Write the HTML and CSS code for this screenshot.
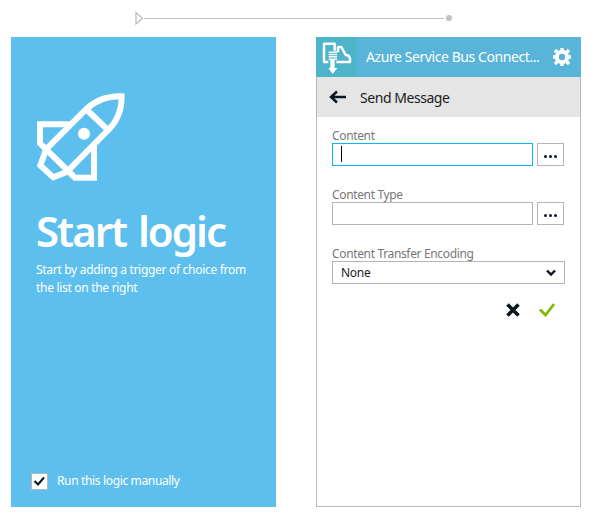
FILE: index.html
```html
<!DOCTYPE html>
<html lang="en">
<head>
<meta charset="utf-8">
<title>Logic designer</title>
<link rel="stylesheet" href="styles.css">
</head>
<body>
<div class="connector">
  <svg width="320" height="16" viewBox="0 0 320 16">
    <path d="M1 2.500V14L7.500 8.300Z" fill="none" stroke="#bfc3c9" stroke-width="1.400"/>
    <path d="M9 8.500H309" stroke="#bfc3c9"/>
    <circle cx="314" cy="8" r="3" fill="#bfc3c9"/>
  </svg>
</div>
<main class="cards">
  <section class="start">
    <svg class="rocket" width="90" height="90" viewBox="48 36 270 270" fill="none" stroke="#fff" stroke-width="18">
      <path d="M72 214L197 89C229 58 266 48 305 49C305 90 290 127 262 153L139 277"/>
      <path d="M201 90L266 152"/>
      <path d="M150 133H60V190L165 293H222V196"/>
      <path d="M78 209L61 256L100 292L150 272"/>
      <circle cx="192" cy="161" r="18" fill="#fff" stroke="none"/>
    </svg>
    <h1 class="title">Start logic</h1>
    <p class="hint">Start by adding a trigger of choice from<br>the list on the right</p>
    <div class="manual">
      <span class="checkbox"><svg width="15" height="15" viewBox="0 0 15 15"><path d="M2.500 7L6 10.500L12 3.500" fill="none" stroke="#0b1620" stroke-width="2"/></svg></span>
      <span class="manual-text">Run this logic manually</span>
    </div>
  </section>
  <section class="panel">
    <header class="head">
      <svg class="logo" width="40" height="40" viewBox="0 0 120 120">
        <path d="M0 0H120V120H0Z" fill="#4db4c9"/>
        <g fill="none" stroke="#fff" stroke-width="7.500" stroke-linejoin="round">
          <path d="M37 75H24V20H56V41"/>
          <path d="M61 75H102V66C101 58 97 54 89 54L76 30H66V46"/>
        </g>
        <path d="M38 45.500H63M38 52.500H63M38 59.500H63M38 66.500H63" stroke="#fff" stroke-width="4.500"/>
        <path d="M43 68H56V93H64L50 111L37 93H43Z" fill="#fff"/>
      </svg>
      <span class="head-text">Azure Service Bus Connect...</span>
      <svg class="gear" width="18" height="18" viewBox="-9 -9 18 18" fill="none" stroke="#fff">
        <circle r="5.200" stroke-width="4"/>
        <path d="M0-9V-6M0 6V9M-9 0H-6M6 0H9M-7-7L-4.300-4.300M4.300 4.300L7 7M-7 7L-4.300 4.300M4.300-4.300L7-7" stroke-width="3.400"/>
      </svg>
    </header>
    <div class="subhead">
      <svg width="17" height="14" viewBox="0 0 17 14" fill="none" stroke="#0b1620" stroke-width="2.500"><path d="M17 7H2M8 1.500L2 7L8 12.500"/></svg>
      <span class="subhead-text">Send Message</span>
    </div>
    <div class="form">
      <div class="field">
        <div class="label">Content</div>
        <div class="row"><div class="input focus"><i class="caret"></i></div><div class="more"><i></i><i></i><i></i></div></div>
      </div>
      <div class="field">
        <div class="label">Content Type</div>
        <div class="row"><div class="input"></div><div class="more"><i></i><i></i><i></i></div></div>
      </div>
      <div class="field">
        <div class="label">Content Transfer Encoding</div>
        <div class="select"><span>None</span><svg width="10" height="8" viewBox="0 0 10 8"><path d="M1 1.500L5 5.500L9 1.500" fill="none" stroke="#0b1620" stroke-width="2.400"/></svg></div>
      </div>
      <div class="actions">
        <svg width="14" height="14" viewBox="0 0 14 14"><path d="M1.500 1.500L12.500 12.500M12.500 1.500L1.500 12.500" stroke="#0b1620" stroke-width="3.600"/></svg>
        <svg width="16" height="14" viewBox="0 0 16 14"><path d="M1 6.500L6.500 12L15 1" fill="none" stroke="#7fba00" stroke-width="2.800"/></svg>
      </div>
    </div>
  </section>
</main>
</body>
</html>
```
FILE: styles.css
```css
* { box-sizing: border-box; }
body {
  margin: 0;
  height: 516px;
  overflow: hidden;
  background: #fff;
  font-family: "Noto Sans", "Open Sans", sans-serif;
  font-size: 12px;
  white-space: nowrap;
}
svg { display: block; flex: none; }
.connector { height: 37px; padding: 10px 0 0 135px; }
.cards { display: flex; gap: 40px; padding-left: 11px; }
.start {
  width: 265px;
  height: 470px;
  padding: 55px 20px 17px 25px;
  display: flex;
  flex-direction: column;
  background: #5dbfed;
  color: #fff;
}
.title {
  margin: 19px 0 0;
  font-size: 42px;
  line-height: 60px;
  font-weight: 600;
  letter-spacing: -2px;
  word-spacing: 3px;
}
.hint { margin: 0; line-height: 18px; letter-spacing: -0.3px; }
.manual { display: flex; align-items: center; gap: 9px; margin: auto 0 0 -5px; }
.checkbox { width: 17px; height: 17px; border: 1px solid #b8b8b8; background: #fff; }
.manual-text { line-height: 18px; letter-spacing: -0.35px; }
.panel {
  width: 265px;
  height: 470px;
  border: 1px solid #b7babd;
  border-top: 0;
}
.head {
  display: flex;
  align-items: center;
  height: 40px;
  margin: 0 -1px;
  padding-right: 10px;
  background: #59b4d9;
  color: #fff;
}
.head-text { flex: 1; margin: -2px 0 0 10px; font-size: 14px; letter-spacing: -0.42px; }
.subhead {
  display: flex;
  align-items: center;
  height: 40px;
  padding-left: 12px;
  gap: 14px;
  background: #e5e5e5;
  color: #1c1c1c;
  font-size: 14px;
}
.subhead-text { letter-spacing: -0.45px; }
.form { padding: 10px 15px 0; }
.field { height: 59px; }
.label { height: 16px; line-height: 18px; color: #777; letter-spacing: -0.35px; }
.row { display: flex; gap: 4px; }
.input { width: 201px; height: 23px; border: 1px solid #b3b6b9; padding: 2px 8px; }
.focus { border-color: #00bcf2; }
.caret { display: block; width: 1px; height: 16px; background: #000; }
.more {
  display: flex;
  align-items: center;
  justify-content: center;
  gap: 2px;
  width: 27px;
  height: 23px;
  padding-top: 3px;
  border: 1px solid #b3b6b9;
}
.more i { width: 3px; height: 3px; border-radius: 1.500px; background: #0b1620; }
.select {
  display: flex;
  align-items: center;
  justify-content: space-between;
  width: 233px;
  height: 23px;
  padding: 0 8px;
  border: 1px solid #b3b6b9;
  color: #1c1c1c;
  letter-spacing: -0.3px;
}
.actions { display: flex; justify-content: flex-end; gap: 19px; padding: 0 10px; margin-top: -1px; }
```
